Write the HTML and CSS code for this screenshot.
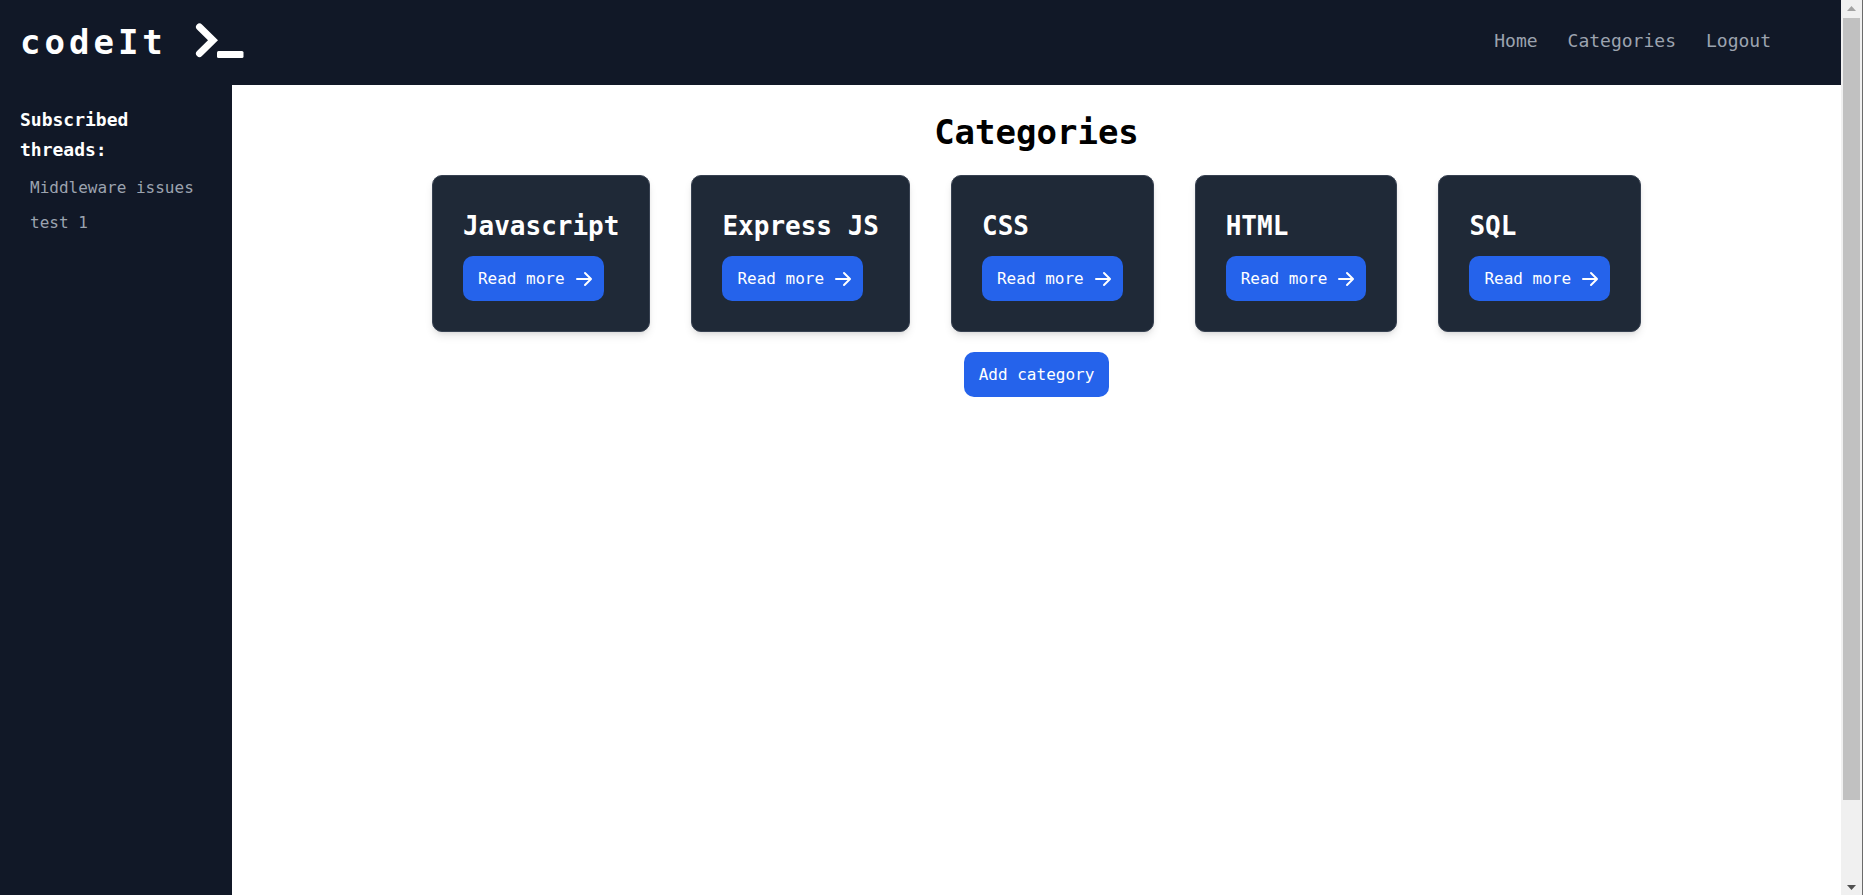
FILE: index.html
```html
<!DOCTYPE html>
<html lang="en">
<head>
<meta charset="utf-8">
<title>codeIt - Categories</title>
<link rel="stylesheet" href="styles.css">
</head>
<body>
<div class="page">
  <header class="header">
    <a class="logo" href="#">
      <span>codeIt</span>
      <svg class="logo-icon" viewBox="0 0 50 36" aria-hidden="true">
        <path d="M4.500 5 18 18.200 4.500 31.500" fill="none" stroke="currentColor" stroke-width="7" stroke-linecap="round" stroke-linejoin="miter"/>
        <rect x="22" y="29" width="26.500" height="7" rx="1.500" fill="currentColor"/>
      </svg>
    </a>
    <nav class="nav">
      <a href="#">Home</a>
      <a href="#">Categories</a>
      <a href="#">Logout</a>
    </nav>
  </header>
  <div class="body">
    <aside class="sidebar">
      <h2 class="sidebar-title">Subscribed threads:</h2>
      <ul class="threads">
        <li><a href="#">Middleware issues</a></li>
        <li><a href="#">test 1</a></li>
      </ul>
    </aside>
    <main class="main">
      <h1 class="title">Categories</h1>
      <div class="cards">
        <article class="card">
          <h3 class="card-title">Javascript</h3>
          <a class="button" href="#">Read more <svg class="arrow" viewBox="0 0 20 20" aria-hidden="true"><use href="#arrow"/></svg></a>
        </article>
        <article class="card">
          <h3 class="card-title">Express JS</h3>
          <a class="button" href="#">Read more <svg class="arrow" viewBox="0 0 20 20" aria-hidden="true"><use href="#arrow"/></svg></a>
        </article>
        <article class="card">
          <h3 class="card-title">CSS</h3>
          <a class="button" href="#">Read more <svg class="arrow" viewBox="0 0 20 20" aria-hidden="true"><use href="#arrow"/></svg></a>
        </article>
        <article class="card">
          <h3 class="card-title">HTML</h3>
          <a class="button" href="#">Read more <svg class="arrow" viewBox="0 0 20 20" aria-hidden="true"><use href="#arrow"/></svg></a>
        </article>
        <article class="card">
          <h3 class="card-title">SQL</h3>
          <a class="button" href="#">Read more <svg class="arrow" viewBox="0 0 20 20" aria-hidden="true"><use href="#arrow"/></svg></a>
        </article>
      </div>
      <button class="button" type="button">Add category</button>
    </main>
  </div>
</div>
<div class="scrollbar" aria-hidden="true">
  <svg class="scroll-up" viewBox="0 0 21 18"><path d="M6 11 10.500 6 15 11z" fill="#a3a3a3"/></svg>
  <div class="scroll-track"><div class="scroll-thumb"></div></div>
  <svg class="scroll-down" viewBox="0 0 21 18"><path d="M6 8 10.500 13 15 8z" fill="#505050"/></svg>
</div>
<svg class="symbols" aria-hidden="true">
  <symbol id="arrow" viewBox="0 0 20 20"><path fill="currentColor" d="M10.293 3.293a1 1 0 011.414 0l6 6a1 1 0 010 1.414l-6 6a1 1 0 01-1.414-1.414L14.586 11H3a1 1 0 110-2h11.586l-4.293-4.293a1 1 0 010-1.414z"/></symbol>
</svg>
</body>
</html>
```
FILE: styles.css
```css
* { box-sizing: border-box; margin: 0; padding: 0; }

body {
  display: flex;
  min-height: 100vh;
  background: #fff;
  color: #000;
  font-family: Consolas, "DejaVu Sans Mono", "Liberation Mono", monospace;
  font-size: 16px;
}

a { color: inherit; text-decoration: none; }
ul { list-style: none; }

.page { flex: 1; display: flex; flex-direction: column; }

.header {
  display: flex;
  justify-content: space-between;
  padding: 20px 70px 20px 20px;
  background: #111827;
}

.logo {
  display: flex;
  gap: 28px;
  color: #fff;
  font-size: 34px;
  font-weight: 700;
  line-height: 45px;
  letter-spacing: 4px;
}
.logo-icon { width: 50px; height: 36px; margin-top: 2px; }

.nav {
  display: flex;
  gap: 30px;
  padding-top: 6px;
  color: #9ca3af;
  font-size: 18px;
  line-height: 30px;
}

.body { flex: 1; display: flex; }

.sidebar {
  width: 232px;
  padding: 20px;
  background: #111827;
  color: #9ca3af;
}
.sidebar-title {
  color: #fff;
  font-size: 18px;
  line-height: 30px;
}
.threads {
  padding: 5px 0 0 10px;
  line-height: 35px;
  white-space: nowrap;
}

.main {
  flex: 1;
  display: flex;
  flex-direction: column;
  align-items: center;
  gap: 20px;
  padding: 25px 20px;
}
.title { font-size: 34px; line-height: 45px; }

.cards { display: flex; flex-wrap: wrap; justify-content: center; gap: 20px 41px; }
.card {
  padding: 30px;
  border: 1px solid #374151;
  border-radius: 10px;
  background: #1f2937;
  box-shadow: 0 5px 8px -1px rgba(0, 0, 0, .1), 0 2px 5px -2px rgba(0, 0, 0, .1);
}
.card-title {
  margin-bottom: 10px;
  color: #fff;
  font-size: 26px;
  line-height: 40px;
}

.button {
  display: inline-flex;
  align-items: center;
  padding: 10px 15px;
  border: 0;
  border-radius: 10px;
  background: #2563eb;
  color: #fff;
  font: inherit;
  line-height: 25px;
}
.arrow { width: 20px; height: 20px; margin: 0 -5px 0 9px; }

.scrollbar {
  display: flex;
  flex-direction: column;
  width: 22px;
  height: 100vh;
  border-right: 1px solid #6b6b6b;
  background: #f0f0f0;
}
.scroll-up, .scroll-down { width: 21px; height: 18px; }
.scroll-track { flex: 1; padding: 0 2px; }
.scroll-thumb { height: 91%; background: #c1c1c1; }

.symbols { position: absolute; width: 0; height: 0; }
```
